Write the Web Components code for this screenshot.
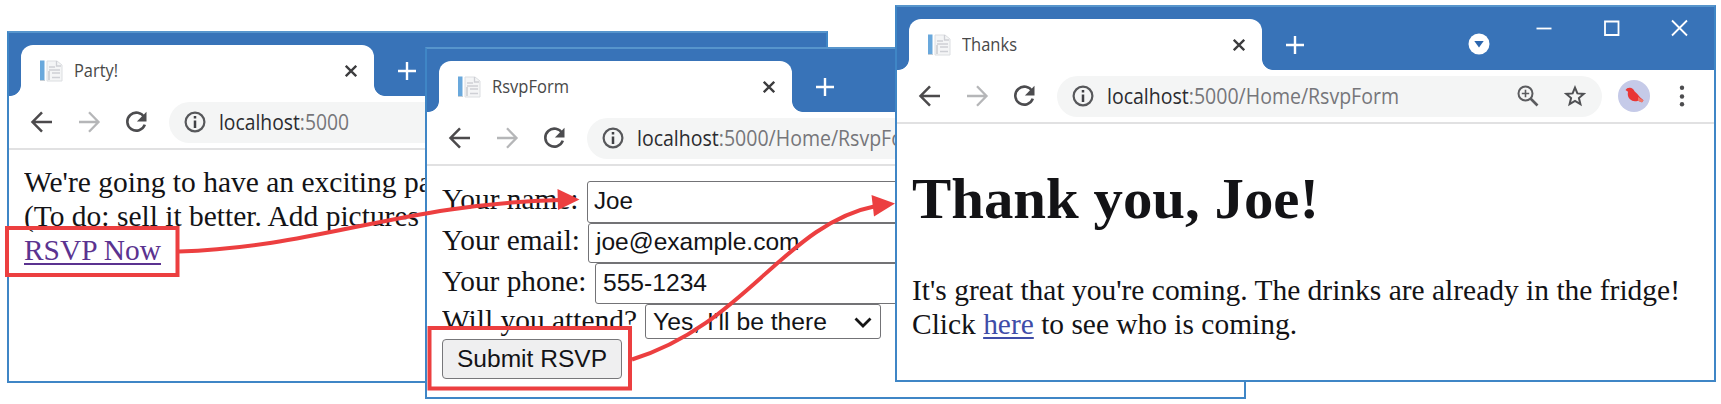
<!DOCTYPE html>
<html lang="en">
<head>
<meta charset="utf-8">
<title>RSVP flow</title>
<style>
body{margin:0;background:#fff;overflow:hidden}
</style>
</head>
<body>
<rsvp-flow></rsvp-flow>
<script>
const define = (name, html, setup) => {
  const t = document.createElement('template');
  t.innerHTML = html;
  customElements.define(name, class extends HTMLElement {
    constructor() {
      super();
      this.attachShadow({mode: 'open'}).append(t.content.cloneNode(true));
    }
    connectedCallback() { if (setup) setup(this, this.shadowRoot); }
  });
};

/* A single line of text condensed or widened to the given width. */
define('fit-line', `<style>:host{display:block;white-space:nowrap}span{display:inline-block;transform-origin:0 50%}</style><span><slot></slot></span>`, (el, root) => {
  const s = root.querySelector('span');
  const w = +el.getAttribute('width');
  s.style.transform = 'scaleX(' + w / s.getBoundingClientRect().width + ')';
  el.style.width = w + 'px';
});

define('tab-strip', `
<style>
:host{display:flex;height:64px;box-sizing:border-box;background:#3873b8;padding:13px 0 0 13px;position:relative}
.tab{width:353px;flex:none;height:51px;background:#fff;border-radius:12px 12px 0 0;display:flex;align-items:center;position:relative;box-sizing:border-box;padding:0 17px 0 18px}
.tab:before,.tab:after{content:"";position:absolute;bottom:0;width:11px;height:11px}
.tab:before{left:-11px;background:radial-gradient(circle at 0 0,transparent 10.5px,#fff 11.3px)}
.tab:after{right:-11px;background:radial-gradient(circle at 100% 0,transparent 10.5px,#fff 11.3px)}
.fav{width:24px;height:24px;margin-right:11px;flex:none}
.title{flex:1;font:17.5px/24px "Open Sans",sans-serif;color:#484848;margin-top:-1px}
.plus{margin:17px 0 0 24px;flex:none}
.x{flex:none}
.controls{margin-left:auto;display:none;margin-right:26px}
:host([controls]) .controls{display:flex}
svg{display:block}
</style>
<div class="tab">
<svg class="fav" viewBox="0 0 24 24"><rect x="1" y="1.5" width="4.5" height="19.500" fill="#69a8dc"/><path d="M1 21.500h5" stroke="#c5ced6"/><path d="M8 21V2h10l5 4v16H8z" fill="#f4f5f6" stroke="#dcdee1"/><path d="M17.500 2v5H22M10 8h6M10 11h11M13 14h8M13 18.500h8" fill="none" stroke="#ced0d5" stroke-width="1.300"/><path d="M10 12v9" stroke="#c6c9ce" stroke-width="1.400"/></svg>
<div class="title"><slot></slot></div>
<svg class="x" width="12" height="12" viewBox="0 0 12 12"><path d="M.8.800 11.200 11.200M11.200.800.800 11.200" stroke="#3c3c3e" stroke-width="2.300"/></svg>
</div>
<svg class="plus" width="18" height="18" viewBox="0 0 18 18"><path d="M9 0v18M0 9h18" stroke="#fff" stroke-width="2.400"/></svg>
<div class="controls">
<svg width="222" height="50" viewBox="0 0 222 50"><circle cx="12" cy="25" r="10.500" fill="#fff"/><path d="M7.300 22h9.400L12 28.500z" fill="#2b66ae"/><path d="M69.500 9.500h15" stroke="#fff" stroke-width="1.800"/><path d="M138 2.500h13.500v13.500H138z" fill="none" stroke="#fff" stroke-width="1.800"/><path d="m205 1.500 15 15m0-15-15 15" stroke="#fff" stroke-width="1.800"/></svg>
</div>`);

define('tool-bar', `
<style>
:host{display:flex;align-items:center;height:54px;box-sizing:border-box;padding-left:21px;padding-right:21px;background:#fff;border-bottom:2px solid #e1e1e2}
svg{display:block;flex:none}
.nav{margin-right:23px}
.box{flex:none;width:545px;height:41px;border-radius:20.500px;background:#f4f5f5;display:flex;align-items:center;box-sizing:border-box;padding-left:15px;margin-right:16px}
.url{font:21.500px/30px "Open Sans",sans-serif;color:#76767a;margin:0 0 0 13px;flex:1}
.dots{margin-left:auto}
</style>
<svg class="nav" width="24" height="24" viewBox="0 0 24 24"><path d="M22 12H3M12 2.300 2.500 12l9.500 9.700" fill="none" stroke="#4c4a4c" stroke-width="2.500"/></svg>
<svg class="nav" width="24" height="24" viewBox="0 0 24 24"><path d="M2 12h19M12 2.300 21.500 12 12 21.700" fill="none" stroke="#b5b6b8" stroke-width="2.300"/></svg>
<svg style="margin-right:21px" width="24" height="24" viewBox="0 0 24 24"><path d="M20.300 7.500A9 9 0 1 0 20.800 14.600" fill="none" stroke="#4c4c4f" stroke-width="2.600"/><path d="M22.500 1.800v9.600h-9.600z" fill="#4c4c4f"/></svg>
<div class="box">
<svg width="22" height="22" viewBox="0 0 22 22"><circle cx="11" cy="11" r="9.400" fill="none" stroke="#57585b" stroke-width="2.200"/><path d="M11 9.500V17M11 5v2.600" stroke="#404145" stroke-width="2.500"/></svg>
<div class="url"><slot></slot></div>
<svg style="margin-right:25px" width="22" height="22" viewBox="0 0 22 22"><circle cx="8.500" cy="8.500" r="7" fill="none" stroke="#5b5c5f" stroke-width="2"/><path d="M8.500 4.800v7.400M4.800 8.500h7.400" stroke="#5b5c5f" stroke-width="1.600"/><path d="m13.500 13.500 7 7" stroke="#5b5c5f" stroke-width="2.600"/></svg>
<svg style="margin-right:16px" width="22" height="22" viewBox="0 0 22 22"><path d="m11 2.600 2.400 5.800 6.300.5-4.800 4.100 1.500 6.100L11 15.800l-5.400 3.300 1.500-6.100-4.800-4.100 6.300-.5z" fill="none" stroke="#505154" stroke-width="2"/></svg>
</div>
<svg width="32" height="32" viewBox="0 0 32 32"><circle cx="16" cy="16" r="16" fill="#c5cae8"/><path d="M7.500 10q1.500-2.500 4.500-2.200 3 .2 4.500 3.500 3.500 3 5.500 6l3.500 3-1.500 2-4-1.500q-5 1.500-8-1.500-3-3-2-7.500z" fill="#e93635"/><path d="m20 17 5.500 3.500-1.500 2-4-1.800z" fill="#f07869"/></svg>
<svg class="dots" width="22" height="22" viewBox="0 0 22 22"><g fill="#4c4c4f"><circle cx="11" cy="2.800" r="2.200"/><circle cx="11" cy="11.500" r="2.200"/><circle cx="11" cy="19.300" r="2.200"/></g></svg>
`);

define('browser-window', `
<style>
:host{display:flex;flex-direction:column;box-sizing:border-box;width:821px;border:2px solid #3f86c6;border-top-color:#5795cc;background:#fff;overflow:hidden}
tab-strip{margin:-1px -1px 0 -1px;flex:none}
tool-bar{flex:none}
.page{font:29px/34px "Liberation Serif",serif;color:#131316;flex:1;padding-left:15px}
</style>
<tab-strip><slot name="title"></slot></tab-strip>
<tool-bar><slot name="url"></slot></tool-bar>
<div class="page"><slot></slot></div>`, (el, root) => {
  if (el.hasAttribute('controls')) root.querySelector('tab-strip').setAttribute('controls', '');
});

define('form-row', `
<style>
:host{display:flex;align-items:baseline;box-sizing:border-box}
.field{box-sizing:border-box;border:1.500px solid #737376;border-radius:3px;background:#fff;height:var(--h);width:var(--w,400px);margin-left:var(--gap,7px);padding-left:6.500px;font:24.400px/var(--lh) "Liberation Sans",sans-serif;display:flex;justify-content:space-between;flex:none}
svg{display:none;margin:12px 8px 0 0}
:host([select]) svg{display:block}
</style>
<slot></slot>
<div class="field"><slot name="value"></slot><svg width="18" height="12" viewBox="0 0 18 12"><path d="m1.500 1.500 7.500 7.500 7.500-7.500" fill="none" stroke="#151515" stroke-width="2.800"/></svg></div>`);

define('rsvp-form', `
<style>
:host{display:grid;grid-template-rows:41.500px 40px 41px 35.500px 40px;padding-top:15px;font-size:29px;line-height:34px}
.btn{box-sizing:border-box;width:180px;height:40px;border:1.500px solid #77777a;border-radius:4px;background:#efeff0;font:24.400px/37.500px "Liberation Sans",sans-serif;padding-left:14px}
</style>
<form-row style="--h:41.500px;--lh:37px;--gap:8px"><fit-line width="136.500">Your name:</fit-line><fit-line slot="value" width="39">Joe</fit-line></form-row>
<form-row style="--h:40px;--lh:35px;--gap:8px"><fit-line width="138">Your email:</fit-line><fit-line slot="value" width="203.500">joe@example.com</fit-line></form-row>
<form-row style="--h:41px;--lh:37px;--gap:8.500px"><fit-line width="144.500">Your phone:</fit-line><fit-line slot="value" width="104">555-1234</fit-line></form-row>
<form-row select style="--h:35.500px;--lh:33px;--w:236px;--gap:8px;margin-top:-1px"><fit-line width="195">Will you attend?</fit-line><fit-line slot="value" width="174">Yes, I'll be there</fit-line></form-row>
<div class="btn"><fit-line width="150">Submit RSVP</fit-line></div>`);

define('rsvp-flow', `
<style>
:host{display:block;position:relative;width:1721px;height:404px;overflow:hidden}
browser-window{position:absolute}
.party{left:7px;top:31px;height:351.500px}
.form{left:425px;top:47px;height:352px}
.thanks{left:895px;top:5px;height:376.500px}
b{font-weight:400;color:#2b2b2f}
a{text-decoration:underline;text-decoration-thickness:2px;text-underline-offset:3px}
.v{color:#5b3390}.l{color:#3f4da8}
h1{margin:42px 0 41px;font-size:58px;line-height:66px}
.marks{position:absolute;left:0;top:0}
</style>
<browser-window class="party">
<fit-line slot="title" width="44">Party!</fit-line>
<fit-line slot="url" width="130"><b>localhost</b>:5000</fit-line>
<div style="padding-top:15px"><fit-line width="446">We're going to have an exciting party.</fit-line><fit-line width="395">(To do: sell it better. Add pictures</fit-line><fit-line width="137"><a class="v">RSVP Now</a></fit-line></div>
</browser-window>
<browser-window class="form">
<fit-line slot="title" width="77">RsvpForm</fit-line>
<fit-line slot="url" width="292"><b>localhost</b>:5000/Home/RsvpForm</fit-line>
<rsvp-form></rsvp-form>
</browser-window>
<browser-window class="thanks" controls>
<fit-line slot="title" width="55">Thanks</fit-line>
<fit-line slot="url" width="292"><b>localhost</b>:5000/Home/RsvpForm</fit-line>
<h1><fit-line width="407">Thank you, Joe!</fit-line></h1>
<fit-line width="768">It's great that you're coming. The drinks are already in the fridge!</fit-line>
<fit-line width="385">Click <a class="l">here</a> to see who is coming.</fit-line>
</browser-window>
<svg class="marks" width="1721" height="404" viewBox="0 0 1721 404" fill="none" stroke="#ec3f40" stroke-width="4">
<path d="M7 228h170.500v47H7z"/><path d="M429.500 328h200.500v60.500H429.500z"/>
<path d="M179 251.500C320 247 400 204 560 200"/><path d="M632 359.500C745 325 785 224 876 206"/>
<g fill="#ec3f40" stroke="none"><path d="m557.500 189 22 10.500-21.500 10.500z"/><path d="m871.500 195 23.500 8.500-21 13z"/></g>
</svg>`);
</script>
</body>
</html>
